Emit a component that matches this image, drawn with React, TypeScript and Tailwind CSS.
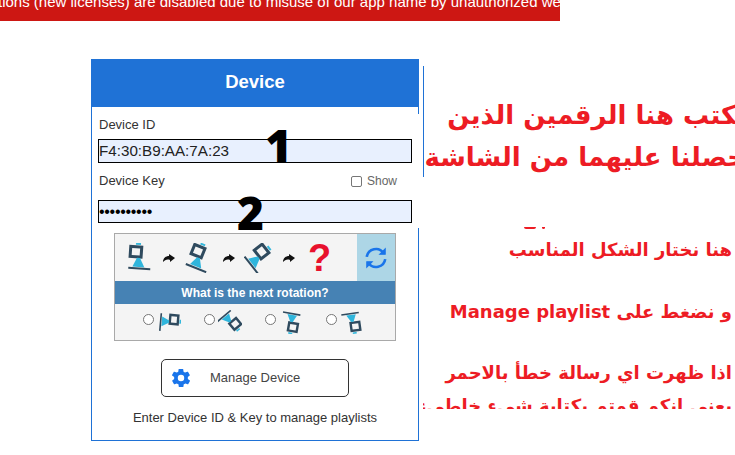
const arabic = "font-['DejaVu_Sans','Noto_Sans',sans-serif]";

function Puzzle({ angle, size = 30 }: { angle: number; size?: number }) {
  return (
    <svg width={size} height={size} viewBox="0 0 30 30" className="shrink-0">
      <g transform={`rotate(${angle} 15 15)`}>
        <rect x="6" y="4" width="11" height="10" fill="none" stroke="#2f4a5e" strokeWidth="3" />
        <path d="M11 1h5" stroke="#35b8dc" strokeWidth="2" />
        <path d="M13 15h3l5 9H9z" fill="#2fb5dc" />
        <path d="M5 25.500h22" stroke="#2f4a5e" strokeWidth="2" />
      </g>
    </svg>
  );
}

function Arrow() {
  return (
    <svg width="14" height="10" viewBox="0 0 14 10" className="shrink-0">
      <path d="M1 9c0-4 3-6 6-6V1l6 4-5 4V7C5 6 3 7 1 9z" fill="#111" />
    </svg>
  );
}

function Option({ angle }: { angle: number }) {
  return (
    <div className="flex items-center gap-[3px]">
      <span className="mb-[5px] h-[11px] w-[11px] shrink-0 rounded-full border border-[#767676] bg-white" />
      <Puzzle angle={angle} size={24} />
    </div>
  );
}

export default function App() {
  return (
    <div className="h-[455px] w-[735px] overflow-hidden bg-white font-['Liberation_Sans',sans-serif]">
      <div className="h-[21px] w-[560px] overflow-hidden bg-[#cd1713]">
        <p className="mt-[-10px] ml-[-2px] text-[15px] leading-[24px] whitespace-nowrap text-white">
          tions (new licenses) are disabled due to misuse of our app name by unauthorized web
        </p>
      </div>

      <div className="flex pt-[38px] pl-[91px]">
        <div className="relative h-[382px] w-[328px] shrink-0 border border-[#1f72d6]">
          <h1 className="flex h-[47px] items-center justify-center bg-[#1f72d6] pb-[4px] text-[18.5px] font-bold text-white">
            Device
          </h1>

          <div className="px-[6px] pt-[10px]">
            <label className="block pl-[1px] text-[13px] leading-[16px] text-[#333]">Device ID</label>
            <div className="mt-[6px] flex h-[24px] items-center border border-black bg-[#e8f0fe] text-[15.2px] text-[#222]">
              F4:30:B9:AA:7A:23
            </div>

            <div className="mt-[10px] flex items-center justify-between pr-[15px] pl-[1px] text-[13px] leading-[16px]">
              <span className="text-[#333]">Device Key</span>
              <span className="flex items-center gap-[5px] text-[12px] text-[#666]">
                <span className="h-[11px] w-[11px] rounded-[2px] border border-[#767676] bg-white" />
                Show
              </span>
            </div>
            <div className="mt-[11px] flex h-[23px] items-center border border-black bg-[#e8f0fe] text-[16px] tracking-[-0.3px] text-black">
              ••••••••••
            </div>
          </div>

          <div className="mx-[22px] mt-[10px] border border-[#a9a9a9] bg-[#f4f4f4]">
            <div className="flex h-[47px]">
              <div className="flex flex-1 items-center gap-[8px] pl-[9px]">
                <Puzzle angle={4} />
                <Arrow />
                <Puzzle angle={22} />
                <Arrow />
                <Puzzle angle={52} />
                <Arrow />
                <span className="ml-[4px] text-[38px] leading-none font-bold text-[#e8112d]">?</span>
              </div>
              <div className="flex w-[38px] items-center justify-center bg-[#add6e6]">
                <svg width="26" height="26" viewBox="0 0 24 24" fill="none" stroke="#1a75ea" strokeWidth="2.4">
                  <path d="M3.500 11A8.500 8.500 0 0 1 19 7.500" />
                  <path d="M20.500 13A8.500 8.500 0 0 1 5 16.500" />
                  <path d="M20.500 3.500v5h-5z" fill="#1a75ea" strokeWidth="1" />
                  <path d="M3.500 20.500v-5h5z" fill="#1a75ea" strokeWidth="1" />
                </svg>
              </div>
            </div>
            <div className="flex h-[23px] items-center justify-center bg-[#4682b4] text-[12px] font-bold text-white">
              What is the next rotation?
            </div>
            <div className="flex h-[36px] items-center gap-[23px] pl-[28px]">
              <Option angle={95} />
              <Option angle={140} />
              <Option angle={190} />
              <Option angle={172} />
            </div>
          </div>

          <button className="mx-auto mt-[18px] flex h-[38px] w-[188px] items-center rounded-[5px] border border-[#333] pl-[8px] text-[13px] text-[#444]">
            <svg width="22" height="22" viewBox="0 0 24 24" fill="#1a75ea" className="shrink-0">
              <path d="M19.400 13c.1-.3.100-.7.100-1s0-.7-.1-1l2.100-1.600c.2-.2.200-.4.100-.6l-2-3.500c-.1-.2-.4-.3-.6-.2l-2.500 1c-.5-.4-1.100-.7-1.700-1l-.4-2.600c0-.3-.2-.4-.5-.4h-4c-.2 0-.5.100-.5.400l-.4 2.600c-.6.300-1.200.6-1.700 1l-2.500-1c-.2-.1-.5 0-.6.200l-2 3.500c-.1.200-.1.400.1.600L4.600 11c-.1.300-.1.700-.1 1s0 .7.100 1l-2.100 1.600c-.2.200-.2.400-.1.600l2 3.500c.1.200.4.300.6.200l2.500-1c.5.400 1.100.7 1.700 1l.4 2.600c0 .3.300.4.500.4h4c.3 0 .5-.1.500-.4l.4-2.600c.6-.3 1.200-.6 1.700-1l2.500 1c.2.100.5 0 .6-.2l2-3.500c.1-.2.100-.4-.1-.6L19.400 13zM12 15.500a3.500 3.500 0 1 1 0-7 3.500 3.500 0 0 1 0 7z" />
            </svg>
            <span className="ml-[18px]">Manage Device</span>
          </button>

          <p className="mt-[13px] text-center text-[13px] leading-[16px] text-[#333]">
            Enter Device ID &amp; Key to manage playlists
          </p>

          <span className="absolute top-[55px] left-[173px] font-['Noto_Sans',sans-serif] text-[46px] leading-[60px] font-black text-black">
            1
          </span>
          <span className="absolute top-[122px] left-[145px] font-['Noto_Sans',sans-serif] text-[46px] leading-[60px] font-black text-black">
            2
          </span>
          {/* pasted note covers this part of the card's edge */}
          <span className="absolute top-[54px] right-[-1px] h-[114px] w-[2px] bg-white" />
        </div>

        <div dir="rtl" className={`ml-[4px] flex h-[382px] w-[312px] flex-col overflow-hidden text-[#ed1c24] ${arabic}`}>
          <div className="mt-[7px] h-[111px] shrink-0 border-l border-[#1f72d6]">
            <div className="-mr-[11px] pt-[28px] text-[26px] leading-[42px] font-bold whitespace-nowrap">
              <p>نكتب هنا الرقمين الذين</p>
              <p>حصلنا عليهما من الشاشة</p>
            </div>
          </div>
          <div className="mt-[50px] flex h-[2px] shrink-0 gap-[6px] pr-[190px]">
            <span className="h-[2px] w-[3px] rounded-b-full bg-[#ed1c24]" />
            <span className="h-[2px] w-[12px] rounded-b-full bg-[#ed1c24]" />
          </div>
          <p className="mt-[9px] pr-[3px] text-[18px] leading-[24px] font-bold whitespace-nowrap">
            هنا نختار الشكل المناسب
          </p>
          <p className="mt-[38px] pr-[3px] text-[18px] leading-[24px] font-bold whitespace-nowrap">
            و نضغط على Manage playlist
          </p>
          <div className="mt-[32px] h-[53px] overflow-hidden pr-[3px] text-[18px] leading-[33px] font-bold whitespace-nowrap">
            <p>اذا ظهرت اي رسالة خطأ بالاحمر</p>
            <p>يعني انكم قمتم بكتابة شيء خاطيء</p>
          </div>
        </div>
      </div>
    </div>
  );
}
